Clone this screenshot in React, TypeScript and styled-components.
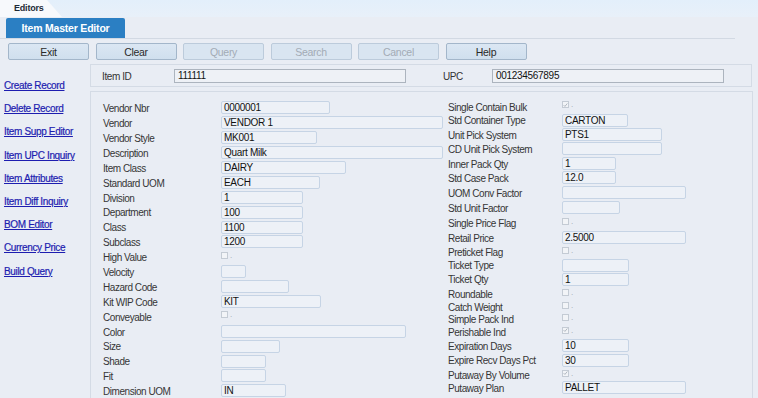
import styled, { createGlobalStyle } from "styled-components";

type Row = {
  label: string;
  value?: string;
  width?: number;
  check?: boolean;
  checked?: boolean;
  h?: number;
};

const leftRows: Row[] = [
  { label: "Vendor Nbr", value: "0000001", width: 109 },
  { label: "Vendor", value: "VENDOR 1", width: 222 },
  { label: "Vendor Style", value: "MK001", width: 96 },
  { label: "Description", value: "Quart Milk", width: 222 },
  { label: "Item Class", value: "DAIRY", width: 125 },
  { label: "Standard UOM", value: "EACH", width: 99 },
  { label: "Division", value: "1", width: 82 },
  { label: "Department", value: "100", width: 82 },
  { label: "Class", value: "1100", width: 82 },
  { label: "Subclass", value: "1200", width: 82 },
  { label: "High Value", check: true },
  { label: "Velocity", value: "", width: 25 },
  { label: "Hazard Code", value: "", width: 68 },
  { label: "Kit WIP Code", value: "KIT", width: 100 },
  { label: "Conveyable", check: true },
  { label: "Color", value: "", width: 185 },
  { label: "Size", value: "", width: 59 },
  { label: "Shade", value: "", width: 45 },
  { label: "Fit", value: "", width: 45 },
  { label: "Dimension UOM", value: "IN", width: 65 },
];

const rightRows: Row[] = [
  { label: "Single Contain Bulk", check: true, checked: true, h: 13.5 },
  { label: "Std Container Type", value: "CARTON", width: 66, h: 14 },
  { label: "Unit Pick System", value: "PTS1", width: 100, h: 14.5 },
  { label: "CD Unit Pick System", value: "", width: 100, h: 14.5 },
  { label: "Inner Pack Qty", value: "1", width: 54, h: 14.5 },
  { label: "Std Case Pack", value: "12.0", width: 54, h: 14.5 },
  { label: "UOM Conv Factor", value: "", width: 124, h: 15 },
  { label: "Std Unit Factor", value: "", width: 58, h: 15.5 },
  { label: "Single Price Flag", check: true, h: 14.5 },
  { label: "Retail Price", value: "2.5000", width: 124, h: 14.5 },
  { label: "Preticket Flag", check: true, h: 14 },
  { label: "Ticket Type", value: "", width: 67, h: 13 },
  { label: "Ticket Qty", value: "1", width: 67, h: 15 },
  { label: "Roundable", check: true, h: 14.5 },
  { label: "Catch Weight", check: true, h: 12 },
  { label: "Simple Pack Ind", check: true, h: 12 },
  { label: "Perishable Ind", check: true, checked: true, h: 13.5 },
  { label: "Expiration Days", value: "10", width: 67, h: 14 },
  { label: "Expire Recv Days Pct", value: "30", width: 67, h: 15 },
  { label: "Putaway By Volume", check: true, checked: true, h: 14 },
  { label: "Putaway Plan", value: "PALLET", width: 124, h: 12 },
];

const links = [
  "Create Record",
  "Delete Record",
  "Item Supp Editor",
  "Item UPC Inquiry",
  "Item Attributes",
  "Item Diff Inquiry",
  "BOM Editor",
  "Currency Price",
  "Build Query",
];

const buttons = [
  { label: "Exit" },
  { label: "Clear" },
  { label: "Query", disabled: true },
  { label: "Search", disabled: true },
  { label: "Cancel", disabled: true },
  { label: "Help" },
];

function CheckBox({ checked }: { checked?: boolean }) {
  return (
    <CheckWrap>
      <Box>
        {checked && (
          <svg width="6" height="6" viewBox="0 0 6 6">
            <path d="M0.8 3.2 L2.3 4.7 L5.2 1.2" fill="none" stroke="#a3abb4" strokeWidth="1" />
          </svg>
        )}
      </Box>
      <Dot>.</Dot>
    </CheckWrap>
  );
}

function FieldRow({ row, labelWidth, height }: { row: Row; labelWidth: number; height: number }) {
  return (
    <FormRow style={{ height }}>
      <Label $width={labelWidth}>{row.label}</Label>
      {row.check ? <CheckBox checked={row.checked} /> : <Field $width={row.width ?? 80}>{row.value}</Field>}
    </FormRow>
  );
}

export default function App() {
  return (
    <>
      <GlobalStyle />
      <Page>
        <TopStrip>
          <EditorsTab>Editors</EditorsTab>
        </TopStrip>
        <TabStrip>
          <ActiveTab>Item Master Editor</ActiveTab>
        </TabStrip>
        <Toolbar>
          {buttons.map((b) => (
            <Button key={b.label} $disabled={b.disabled}>
              {b.label}
            </Button>
          ))}
        </Toolbar>
        <Body>
          <Sidebar>
            {links.map((l) => (
              <SideLink key={l}>{l}</SideLink>
            ))}
          </Sidebar>
          <Content>
            <KeyPanel>
              <KeyLabel $width={72}>Item ID</KeyLabel>
              <KeyField>111111</KeyField>
              <KeyLabel $width={49} style={{ marginLeft: 37 }}>
                UPC
              </KeyLabel>
              <KeyField>001234567895</KeyField>
            </KeyPanel>
            <MainPanel>
              <LeftColumn>
                {leftRows.map((r) => (
                  <FieldRow key={r.label} row={r} labelWidth={118} height={14.9} />
                ))}
              </LeftColumn>
              <RightColumn>
                {rightRows.map((r) => (
                  <FieldRow key={r.label} row={r} labelWidth={114} height={r.h ?? 14.5} />
                ))}
              </RightColumn>
            </MainPanel>
          </Content>
        </Body>
      </Page>
    </>
  );
}

const GlobalStyle = createGlobalStyle`
  html, body {
    margin: 0;
    padding: 0;
    background: #e9edf4;
    overflow: hidden;
  }
  body {
    font-family: "Liberation Sans", Arial, sans-serif;
  }
`;

const Page = styled.div`
  width: 758px;
  height: 398px;
  background: #e9edf4;
  overflow: hidden;
`;

const TopStrip = styled.div`
  height: 17px;
  background: linear-gradient(#e3effb, #e8f0f9);
  display: flex;
  align-items: flex-end;
`;

const EditorsTab = styled.div`
  width: 62px;
  height: 17px;
  box-sizing: border-box;
  padding: 3px 0 0 14px;
  background: #f7f9fc;
  clip-path: polygon(0 0, 47px 0, 62px 100%, 0 100%);
  font-size: 9px;
  font-weight: bold;
  color: #1e2a36;
  letter-spacing: -0.2px;
`;

const TabStrip = styled.div`
  width: 735px;
  height: 22px;
  box-sizing: border-box;
  padding: 2px 0 0 6px;
  border-bottom: 1px solid #d2d9e3;
  display: flex;
  align-items: flex-end;
`;

const ActiveTab = styled.div`
  width: 119px;
  height: 20px;
  background: #2b7fc3;
  border-radius: 2px 2px 0 0;
  color: #fff;
  font-size: 10.5px;
  font-weight: bold;
  letter-spacing: -0.2px;
  display: flex;
  align-items: center;
  justify-content: center;
`;

const Toolbar = styled.div`
  display: flex;
  gap: 6.5px;
  padding: 4px 0 0 8px;
  height: 17px;
`;

const Button = styled.div<{ $disabled?: boolean }>`
  width: 81px;
  height: 17px;
  box-sizing: border-box;
  border: 1px solid ${(p) => (p.$disabled ? "#bccbdb" : "#a3b6ca")};
  border-radius: 2px;
  background: ${(p) => (p.$disabled ? "#d9e5f1" : "linear-gradient(#dbe7f3, #d0dfee)")};
  color: ${(p) => (p.$disabled ? "#a3abb5" : "#2a2a2a")};
  font-size: 10.5px;
  letter-spacing: -0.3px;
  display: flex;
  align-items: center;
  justify-content: center;
`;

const Body = styled.div`
  display: flex;
  margin-top: 4px;
`;

const Sidebar = styled.div`
  width: 90px;
  flex: none;
  padding: 10px 0 0 4px;
  box-sizing: border-box;
  display: flex;
  flex-direction: column;
`;

const SideLink = styled.a`
  display: block;
  height: 23.2px;
  line-height: 23.2px;
  font-size: 10px;
  letter-spacing: -0.35px;
  color: #1d1db0;
  text-decoration: underline;
  white-space: nowrap;
  -webkit-text-stroke: 0.2px #1d1db0;
`;

const Content = styled.div`
  flex: 1;
  margin-right: 5px;
  display: flex;
  flex-direction: column;
  gap: 4px;
`;

const KeyPanel = styled.div`
  height: 23px;
  box-sizing: border-box;
  border: 1px solid #d4dbe5;
  margin-right: 1px;
  padding-left: 11px;
  display: flex;
  align-items: center;
`;

const KeyLabel = styled.span<{ $width: number }>`
  width: ${(p) => p.$width}px;
  flex: none;
  padding-top: 1px;
  font-size: 10px;
  letter-spacing: -0.4px;
  color: #333;
`;

const KeyField = styled.div`
  width: 232px;
  height: 14px;
  box-sizing: border-box;
  border: 1px solid #acb4be;
  background: #eef1f6;
  font-size: 10px;
  line-height: 12px;
  padding-left: 3px;
  letter-spacing: -0.3px;
  color: #111;
`;

const MainPanel = styled.div`
  height: 320px;
  box-sizing: border-box;
  border: 1px solid #d4dbe5;
  padding: 7.5px 0 0 12px;
  display: grid;
  grid-template-columns: 345px 1fr;
  align-items: start;
`;

const LeftColumn = styled.div`
  padding-top: 1px;
  display: flex;
  flex-direction: column;
`;

const RightColumn = styled.div`
  display: flex;
  flex-direction: column;
`;

const FormRow = styled.div`
  display: flex;
  align-items: center;
`;

const Label = styled.span<{ $width: number }>`
  width: ${(p) => p.$width}px;
  flex: none;
  padding-top: 1.5px;
  font-size: 10px;
  letter-spacing: -0.45px;
  color: #363636;
  white-space: nowrap;
`;

const Field = styled.div<{ $width: number }>`
  width: ${(p) => p.$width}px;
  height: 13px;
  flex: none;
  box-sizing: border-box;
  border: 1px solid #c6d4e5;
  border-radius: 2px;
  background: #edf1f7;
  font-size: 10px;
  line-height: 12px;
  padding-left: 2px;
  letter-spacing: -0.3px;
  color: #111;
  white-space: nowrap;
`;

const CheckWrap = styled.span`
  display: flex;
  align-items: flex-end;
  gap: 2px;
  margin-top: -3px;
`;

const Box = styled.span`
  width: 7px;
  height: 7px;
  box-sizing: border-box;
  border: 1px solid #c4cbd4;
  background: #f2f4f7;
  display: flex;
  align-items: center;
  justify-content: center;
`;

const Dot = styled.span`
  font-size: 8px;
  line-height: 6px;
  color: #9aa2ab;
`;
